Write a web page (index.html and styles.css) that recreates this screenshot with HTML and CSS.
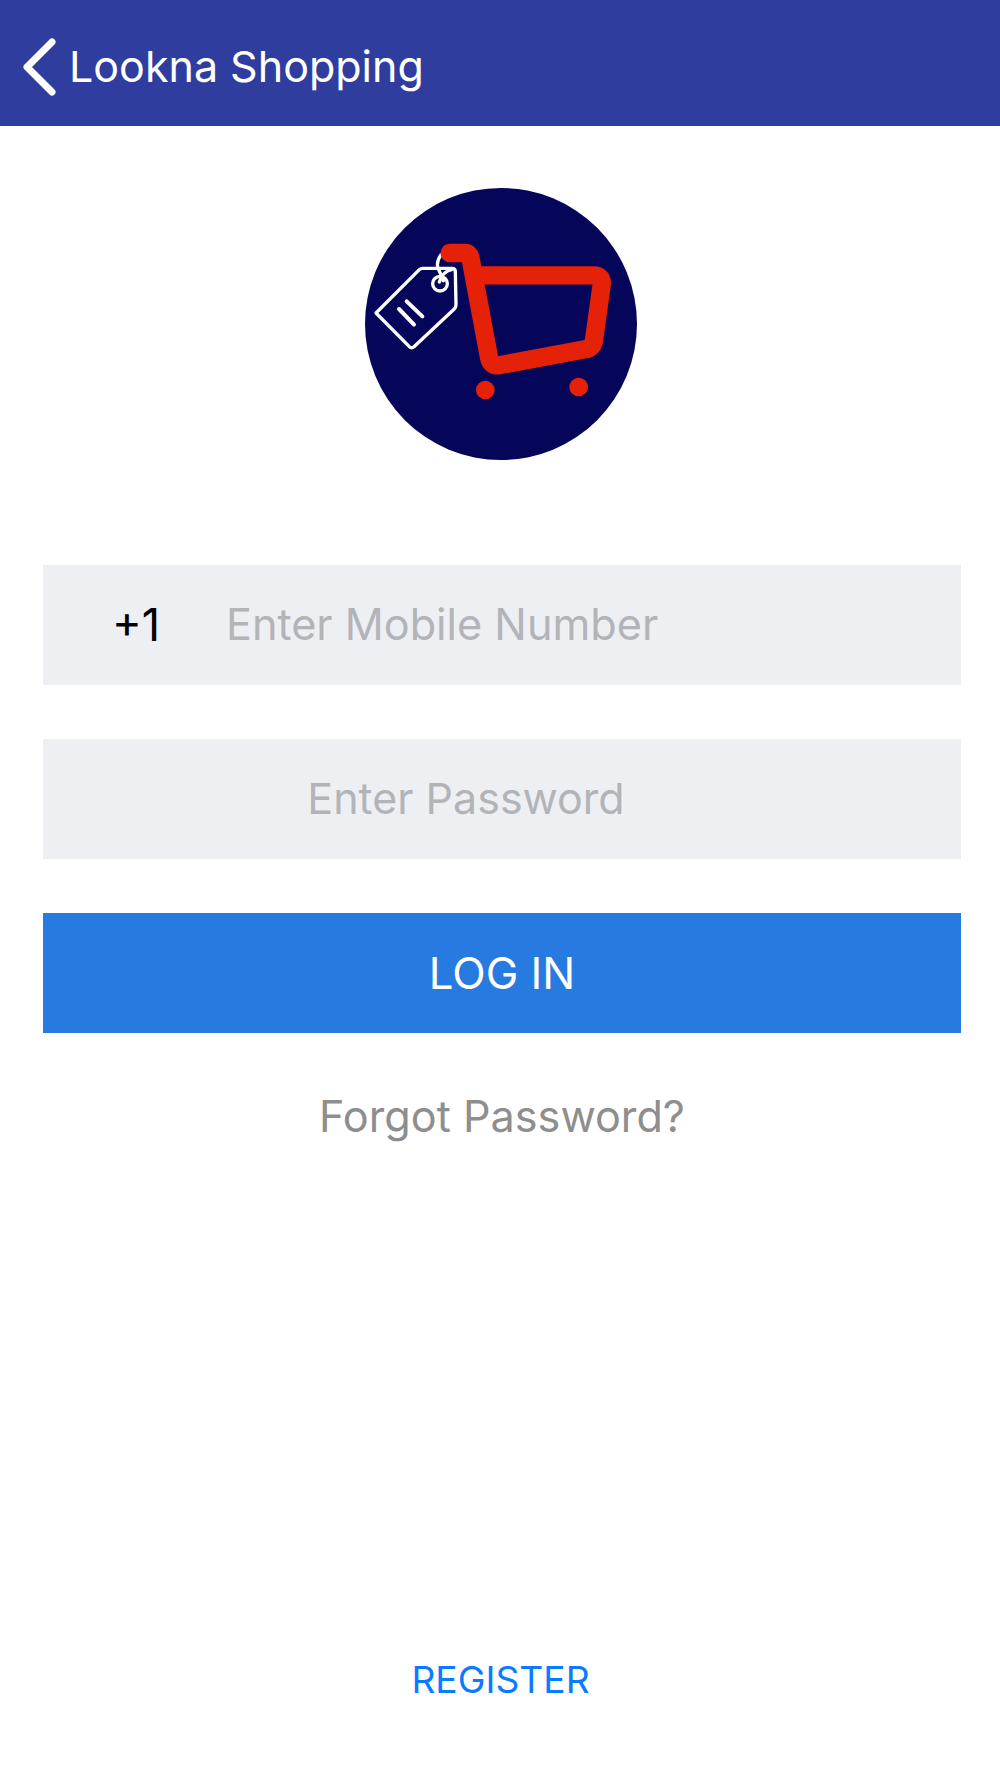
FILE: index.html
```html
<!DOCTYPE html>
<html lang="en">
<head>
    <meta charset="UTF-8">
    <meta name="viewport" content="width=device-width, initial-scale=1.0">
    <title>Lookna Shopping</title>
    <link rel="stylesheet" href="styles.css">
</head>
<body>
    <div class="page">
        <header class="top-bar">
            <svg class="back-icon" width="36" height="60" viewBox="0 0 36 60">
                <path d="M30 5 L5 30 L30 55" fill="none" stroke="#fff" stroke-width="7" stroke-linecap="round" stroke-linejoin="round"/>
            </svg>
            <h1 class="top-title">Lookna Shopping</h1>
        </header>

        <div class="logo-wrap">
            <svg class="logo" width="272" height="272" viewBox="45 40 816 816">
                <circle cx="453" cy="448" r="408" fill="#05055a"/>
                <g fill="none" stroke="#fff" stroke-width="10" stroke-linecap="round" stroke-linejoin="round">
                    <path d="M78 415 L208 285 Q212 281 218 281 H306 Q316 281 316 291 L318 390 Q318 398 312 404 L192 516 Q185 522 178 516 Z"/>
                    <circle cx="270" cy="327" r="22"/>
                    <path d="M273 240 Q258 262 264 280 Q272 298 280 318"/>
                    <path d="M305 285 Q278 290 268 322"/>
                    <path d="M170 380 L217 425" stroke-width="12"/>
                    <path d="M147 403 L192 450" stroke-width="12"/>
                </g>
                <path d="M299 235 H345 Q358 235 361 248 L417 548 Q422 575 447 572 L705 524 Q728 520 732 497 L755 330 Q758 302 730 302 H375" fill="none" stroke="#e52207" stroke-width="55" stroke-linecap="round" stroke-linejoin="round"/>
                <circle cx="406" cy="646" r="28" fill="#e52207"/>
                <circle cx="686" cy="637" r="28" fill="#e52207"/>
            </svg>
        </div>

        <form class="login-form">
            <div class="field">
                <span class="country-code">+1</span>
                <input class="field-input phone" type="tel" placeholder="Enter Mobile Number">
            </div>
            <div class="field">
                <input class="field-input password" type="password" placeholder="Enter Password">
            </div>
            <button type="button" class="login-btn">LOG IN</button>
            <a class="forgot-link" href="#">Forgot Password?</a>
        </form>

        <a class="register-link" href="#">REGISTER</a>
    </div>
</body>
</html>
```

FILE: styles.css
```css
* {
    box-sizing: border-box;
}
body {
    margin: 0;
    background-color: #fff;
    font-family: Inter, "Liberation Sans", sans-serif;
}
.page {
    display: flex;
    flex-direction: column;
    height: 1778px;
    overflow: hidden;
}
.top-bar {
    display: flex;
    align-items: center;
    gap: 11px;
    height: 126px;
    padding: 8px 0 0 22px;
    background-color: #2f3e9e;
}
.back-icon {
    flex: none;
}
.top-title {
    margin: -2px 0 0;
    font-size: 43px;
    font-weight: 400;
    color: #fff;
}
.logo-wrap {
    display: flex;
    justify-content: center;
    padding: 62px 0 0 2px;
}
.logo {
    display: block;
}
.login-form {
    display: flex;
    flex-direction: column;
    gap: 54px;
    margin: 105px 39px 0 43px;
}
.field {
    display: flex;
    align-items: center;
    height: 120px;
    background-color: #eeeff3;
}
.country-code {
    width: 183px;
    padding: 0 0 2px 69px;
    font-size: 45px;
    color: #000;
}
.field-input {
    flex: 1;
    min-width: 0;
    height: 100%;
    padding: 0 0 2px;
    border: none;
    outline: none;
    background: transparent;
    font-family: inherit;
}
.field-input::placeholder {
    color: #b3b4b8;
    opacity: 1;
}
.phone {
    font-size: 43.2px;
}
.password {
    padding-right: 72px;
    font-size: 43px;
    text-align: center;
}
.login-btn {
    height: 120px;
    border: none;
    background-color: #277ae0;
    color: #fff;
    font-family: inherit;
    font-size: 43.7px;
    cursor: pointer;
}
.forgot-link {
    margin-top: 3px;
    text-align: center;
    font-size: 43.2px;
    color: #8e8e8e;
    text-decoration: none;
}
.register-link {
    margin-top: auto;
    margin-bottom: 76px;
    padding-left: 1px;
    text-align: center;
    font-size: 37.2px;
    color: #0a7bff;
    text-decoration: none;
}
```
